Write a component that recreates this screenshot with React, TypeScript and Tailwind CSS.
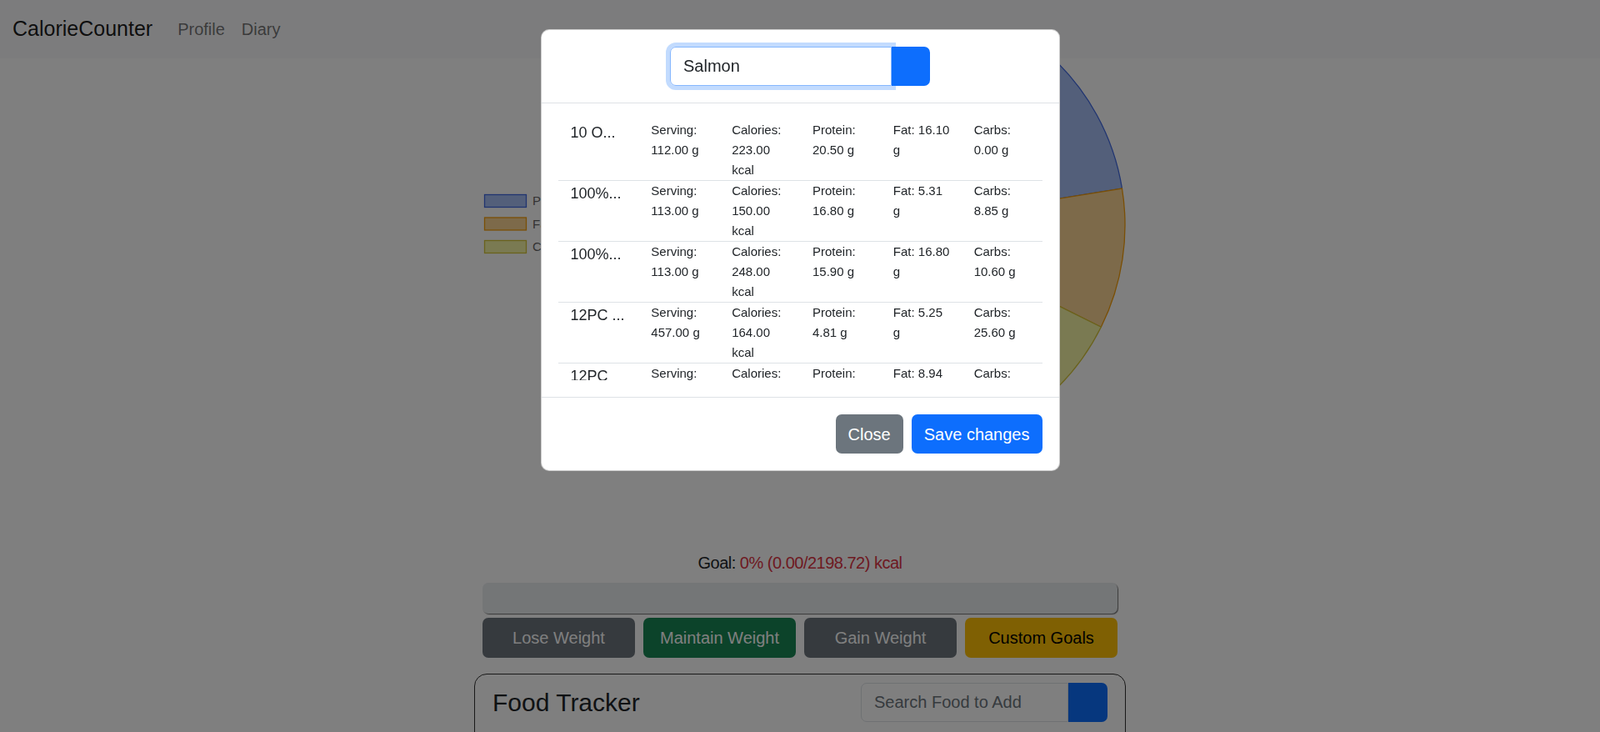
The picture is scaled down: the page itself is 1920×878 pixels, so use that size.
import React from "react";

const results = [
  { name: "10 O...", serving: "112.00", calories: "223.00", protein: "20.50", fat: "16.10", carbs: "0.00" },
  { name: "100%...", serving: "113.00", calories: "150.00", protein: "16.80", fat: "5.31", carbs: "8.85" },
  { name: "100%...", serving: "113.00", calories: "248.00", protein: "15.90", fat: "16.80", carbs: "10.60" },
  { name: "12PC ...", serving: "457.00", calories: "164.00", protein: "4.81", fat: "5.25", carbs: "25.60" },
  { name: "12PC", serving: "457.00", calories: "212.00", protein: "6.12", fat: "8.94", carbs: "28.30" },
];

const legend = [
  { label: "Protein", fill: "#a6bef4", stroke: "#4169e1" },
  { label: "Fat", fill: "#fad494", stroke: "#f59e0b" },
  { label: "Carbs", fill: "#f4f4a4", stroke: "#d4c43a" },
];

const MacroChart = () => (
  <svg width="782" height="475" viewBox="0 0 782 475" className="block">
    <path d="M506 200 L506 -75 A275 275 0 0 1 777.46 156.03 Z" fill="#a6bef4" stroke="#4169e1" strokeWidth="1.3" />
    <path d="M506 200 L777.46 156.03 A275 275 0 0 1 752.32 322.28 Z" fill="#fad494" stroke="#f59e0b" strokeWidth="1.3" />
    <path d="M506 200 L752.32 322.28 A275 275 0 1 1 506 -75 Z" fill="#f4f4a4" stroke="#d4c43a" strokeWidth="1.3" />
    {legend.map((l, i) => (
      <g key={l.label}>
        <rect x="12.5" y={163.5 + i * 27.5} width="50" height="15" fill={l.fill} stroke={l.stroke} strokeWidth="1.3" />
        <text x="70" y={176 + i * 27.5} fontSize="15" fill="#666" fontFamily="Liberation Sans, Arial, sans-serif">
          {l.label}
        </text>
      </g>
    ))}
  </svg>
);

const cell = "pl-[15px] pr-[13px] text-[15px] leading-[24px]";

export default function App() {
  return (
    <div className="relative h-[878px] overflow-hidden bg-white font-['Liberation_Sans',Arial,sans-serif] text-[#212529]">
      {/* navbar */}
      <nav className="flex h-[70px] items-center bg-[#f8f9fa] px-[15px]">
        <span className="mr-[20px] text-[25px] text-black/90">CalorieCounter</span>
        <span className="px-[10px] text-[20px] text-black/55">Profile</span>
        <span className="px-[10px] text-[20px] text-black/55">Diary</span>
      </nav>

      <main className="mx-auto w-[782px]">
        <MacroChart />

        <p className="mt-[115px] text-center text-[20px] leading-[30px] tracking-[-0.5px]">
          Goal: <span className="text-[#dc3545]">0% (0.00/2198.72) kcal</span>
        </p>
        <div className="mx-[10px] mt-[9px] h-[37px] rounded-[7px] bg-[#e9ecef] shadow-[1px_1px_1px_rgba(0,0,0,0.55)]" />
        <div className="mx-[10px] mt-[5px] grid grid-cols-4 gap-[10px]">
          <button className="h-[48px] rounded-[7px] bg-[#6c757d] text-[20px] text-white">Lose Weight</button>
          <button className="h-[48px] rounded-[7px] bg-[#198754] text-[20px] text-white">Maintain Weight</button>
          <button className="h-[48px] rounded-[7px] bg-[#6c757d] text-[20px] text-white">Gain Weight</button>
          <button className="h-[48px] rounded-[7px] bg-[#ffc107] text-[20px] text-black">Custom Goals</button>
        </div>

        <div className="mt-[19px] h-[300px] rounded-[15px] border border-black/80">
          <div className="flex items-center justify-between px-[21px] py-[10px]">
            <h4 className="text-[30px] leading-[45px]">Food Tracker</h4>
            <div className="flex">
              <input
                placeholder="Search Food to Add"
                className="h-[47px] w-[249px] rounded-l-[7px] border border-[#dee2e6] px-[15px] text-[20px] outline-none placeholder:text-[#6c757d]"
              />
              <button className="h-[47px] w-[47px] rounded-r-[7px] bg-[#0d6efd]" />
            </div>
          </div>
        </div>
      </main>

      {/* backdrop */}
      <div className="fixed inset-0 bg-black/50" />

      {/* modal */}
      <div className="fixed inset-x-0 top-[35px] flex justify-center">
        <div className="w-[623px] rounded-[10px] border border-black/20 bg-white">
          <div className="flex justify-center border-b border-[#dee2e6] p-[20px]">
            <div className="flex">
              <input
                defaultValue="Salmon"
                className="relative z-10 h-[47px] w-[266px] rounded-l-[7px] border border-[#86b7fe] px-[15px] text-[20px] text-[#212529] shadow-[0_0_0_5px_rgba(13,110,253,0.25)] outline-none"
              />
              <button className="h-[47px] w-[46px] rounded-r-[7px] bg-[#0d6efd]" />
            </div>
          </div>

          <div className="p-[20px]">
            <div className="h-[312px] overflow-hidden">
              {results.map((r, i) => (
                <div key={i} className="grid grid-cols-6 border-b border-[#dee2e6]">
                  <div className="whitespace-nowrap px-[15px] text-[18px] leading-[30px]">{r.name}</div>
                  <div className={cell}>Serving: {r.serving} g</div>
                  <div className={cell}>Calories: {r.calories} kcal</div>
                  <div className={cell}>Protein: {r.protein} g</div>
                  <div className={cell}>Fat: {r.fat} g</div>
                  <div className={cell}>Carbs: {r.carbs} g</div>
                </div>
              ))}
            </div>
          </div>

          <div className="flex justify-end gap-[10px] border-t border-[#dee2e6] px-[20px] py-[20px]">
            <button className="h-[47px] rounded-[7px] bg-[#6c757d] px-[15px] text-[20px] text-white">Close</button>
            <button className="h-[47px] rounded-[7px] bg-[#0d6efd] px-[15px] text-[20px] text-white">Save changes</button>
          </div>
        </div>
      </div>
    </div>
  );
}
